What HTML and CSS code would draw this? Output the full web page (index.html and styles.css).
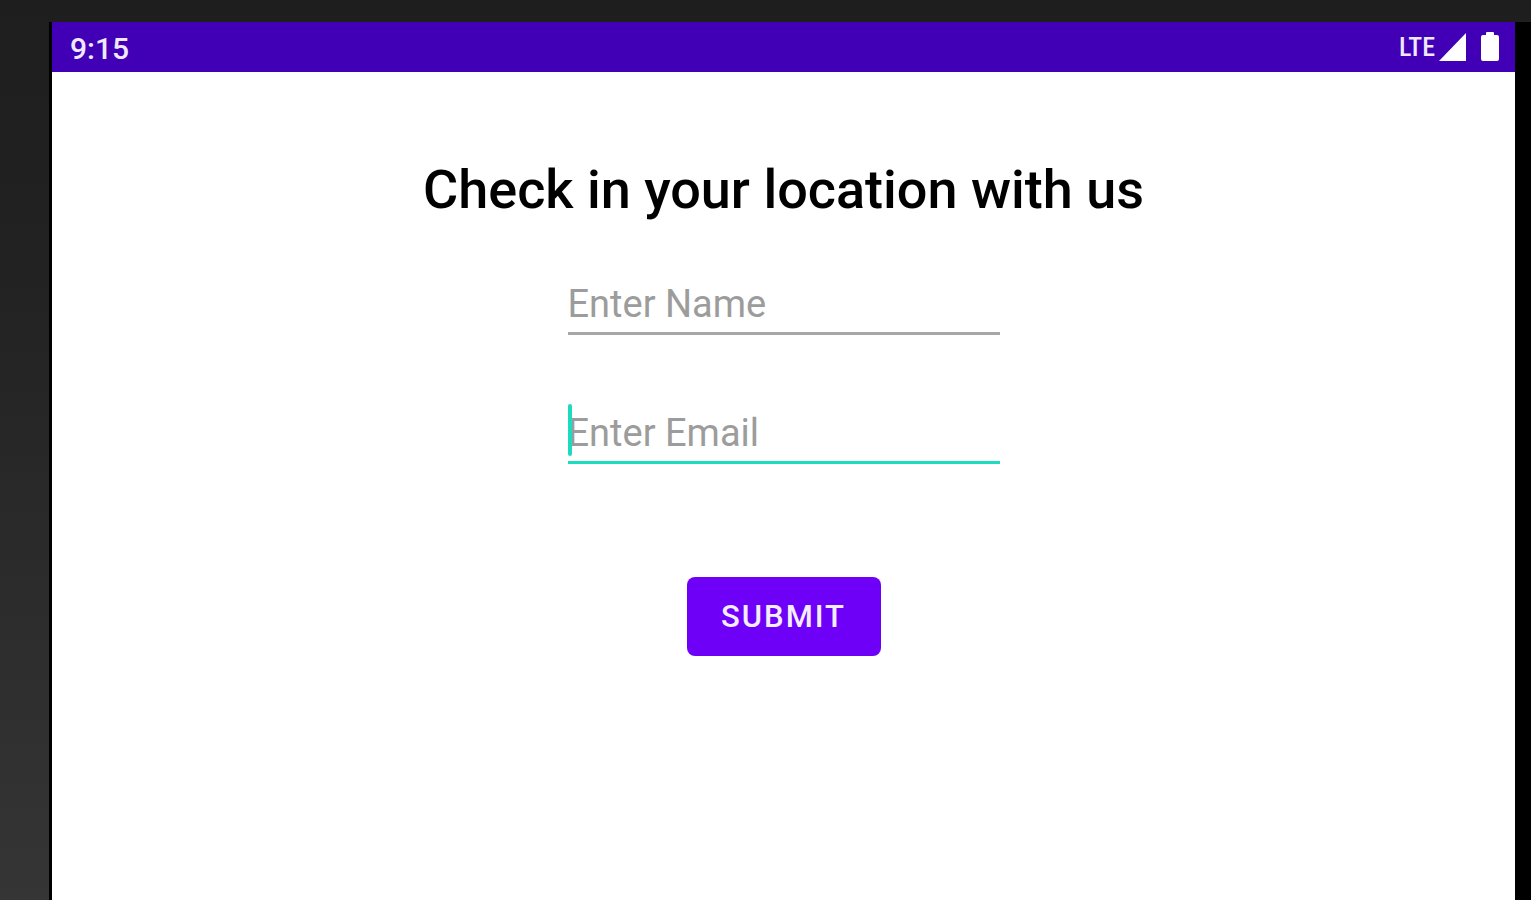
FILE: index.html
```html
<!DOCTYPE html>
<html lang="en">

<head>
  <meta charset="UTF-8" />
  <meta name="viewport" content="width=device-width, initial-scale=1" />
  <title>Check in</title>
  <link rel="stylesheet" href="styles.css">
</head>

<body>
  <div class="screen">
    <header class="status-bar">
      <span class="time">9:15</span>
      <div class="status-icons">
        <span class="network">LTE</span>
        <svg class="signal" width="28" height="28" viewBox="0 0 28 28" aria-hidden="true">
          <path d="M27 0v28H0z" fill="#fff" />
        </svg>
        <svg class="battery" width="18" height="30" viewBox="0 0 18 30" aria-hidden="true">
          <path d="M5 1q0-1 1-1h6q1 0 1 1v2h3a2 2 0 0 1 2 2v22a2 2 0 0 1-2 2H2a2 2 0 0 1-2-2V5a2 2 0 0 1 2-2h3z" fill="#fff" />
        </svg>
      </div>
    </header>

    <main class="content">
      <h1>Check in your location with us</h1>

      <form class="checkin-form">
        <div class="field">
          <input type="text" id="name" placeholder="Enter Name" aria-label="Enter Name" />
        </div>
        <div class="field active">
          <input type="email" id="email" placeholder="Enter Email" aria-label="Enter Email" />
          <span class="cursor"></span>
        </div>
        <button type="submit">SUBMIT</button>
      </form>
    </main>
  </div>
</body>

</html>
```

FILE: styles.css
```css
* {
  box-sizing: border-box;
}

body {
  margin: 0;
  min-height: 100vh;
  display: flex;
  padding-top: 22px;
  font-family: Roboto, sans-serif;
  background: linear-gradient(#1e1e1e, #222 30%, #353536);
}

/* black bezel on both sides of the display */
.screen {
  flex: 1;
  margin-left: 49px;
  background-color: #fff;
  border-left: 3px solid #000;
  border-right: 16px solid #000;
}

.status-bar {
  display: flex;
  justify-content: space-between;
  align-items: center;
  height: 50px;
  padding: 0 16px 0 18px;
  background-color: #4100b5;
  color: #f0e8ff;
}

.time {
  font-size: 30px;
  font-weight: 500;
  line-height: 40px;
  padding-top: 4px;
}

.status-icons {
  display: flex;
  align-items: center;
}

.network {
  font-family: "Roboto Condensed", "Liberation Sans Narrow", sans-serif;
  font-size: 26px;
  font-weight: 500;
}

.signal {
  margin-left: 4px;
}

.battery {
  margin-left: 14px;
}

.content {
  padding: 88px 20px 60px;
  text-align: center;
}

h1 {
  margin: 0;
  font-size: 54px;
  line-height: 60px;
  font-weight: 500;
  color: #000;
}

.checkin-form {
  display: flex;
  flex-direction: column;
  align-items: center;
}

.field {
  position: relative;
  width: 432px;
  max-width: 100%;
  height: 65px;
  margin-top: 50px;
  border-bottom: 3px solid #a6a6a6;
}

.field + .field {
  margin-top: 64px;
}

.field.active {
  border-bottom-color: #1ddbbf;
}

.field input {
  width: 100%;
  height: 62px;
  padding: 6px 0 0;
  border: none;
  outline: none;
  background: transparent;
  font-family: inherit;
  font-size: 38px;
  caret-color: #1ddbbf;
}

.field input::placeholder {
  color: #9c9c9c;
  opacity: 1;
}

/* text cursor in the focused field */
.cursor {
  position: absolute;
  left: 0;
  bottom: 5px;
  width: 4px;
  height: 52px;
  border-radius: 2px;
  background-color: #1ddbbf;
}

button {
  width: 194px;
  height: 79px;
  margin-top: 113px;
  border: none;
  border-radius: 8px;
  background-color: #6f00f8;
  color: #f4ecff;
  font-family: inherit;
  font-size: 31px;
  font-weight: 500;
  letter-spacing: 2px;
  cursor: pointer;
}
```
